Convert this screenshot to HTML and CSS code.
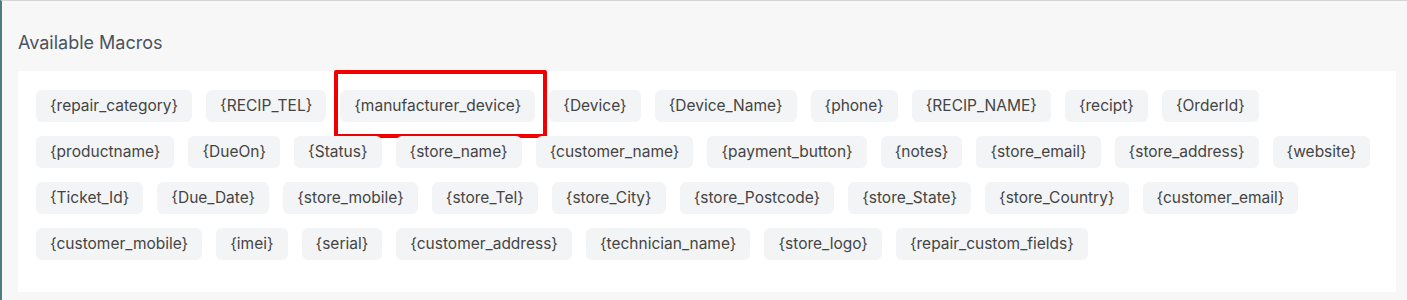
FILE: index.html
```html
<!DOCTYPE html>
<html lang="en">
<head>
    <meta charset="UTF-8" />
    <title>Available Macros</title>
    <link rel="stylesheet" href="styles.css">
</head>
<body>
   <div class="page">
       <h3 class="title">Available Macros</h3>
       <div class="panel">
           <span class="macro">{repair_category}</span>
           <span class="macro">{RECIP_TEL}</span>
           <span class="macro marked">{manufacturer_device}</span>
           <span class="macro">{Device}</span>
           <span class="macro">{Device_Name}</span>
           <span class="macro">{phone}</span>
           <span class="macro">{RECIP_NAME}</span>
           <span class="macro">{recipt}</span>
           <span class="macro">{OrderId}</span>
           <span class="macro">{productname}</span>
           <span class="macro">{DueOn}</span>
           <span class="macro">{Status}</span>
           <span class="macro">{store_name}</span>
           <span class="macro">{customer_name}</span>
           <span class="macro">{payment_button}</span>
           <span class="macro">{notes}</span>
           <span class="macro">{store_email}</span>
           <span class="macro">{store_address}</span>
           <span class="macro">{website}</span>
           <span class="macro">{Ticket_Id}</span>
           <span class="macro">{Due_Date}</span>
           <span class="macro">{store_mobile}</span>
           <span class="macro">{store_Tel}</span>
           <span class="macro">{store_City}</span>
           <span class="macro">{store_Postcode}</span>
           <span class="macro">{store_State}</span>
           <span class="macro">{store_Country}</span>
           <span class="macro">{customer_email}</span>
           <span class="macro">{customer_mobile}</span>
           <span class="macro">{imei}</span>
           <span class="macro">{serial}</span>
           <span class="macro">{customer_address}</span>
           <span class="macro">{technician_name}</span>
           <span class="macro">{store_logo}</span>
           <span class="macro">{repair_custom_fields}</span>
       </div>
   </div>
</body>
</html>
```

FILE: styles.css
```css
*{
    padding:0;
    margin:0;
    box-sizing:border-box;
}
body{
    background:#f7f7f7;
    font-family:Inter, "Noto Sans", sans-serif;
}
.page{
    height:300px;
    border-top:1px solid #d6d6d6;
    border-left:2px solid #4d7c7c;
    padding:0 11px 0 16px;
}
.title{
    font-size:18px;
    font-weight:400;
    color:#4b5260;
    line-height:24px;
    padding-top:30px;
    margin-bottom:16px;
}
.panel{
    background:#fff;
    display:flex;
    flex-wrap:wrap;
    gap:14px;
    padding:19px 18px 32px;
}
.macro{
    position:relative;
    background:#f3f4f6;
    border-radius:6px;
    height:32px;
    line-height:32px;
    padding:0 14px;
    font-size:15.5px;
    color:#444;
}
.marked::after{
    content:'';
    position:absolute;
    top:-20px;
    left:-6px;
    right:-12px;
    bottom:-16px;
    border:4px solid #f00000;
    border-radius:2px;
}
```
